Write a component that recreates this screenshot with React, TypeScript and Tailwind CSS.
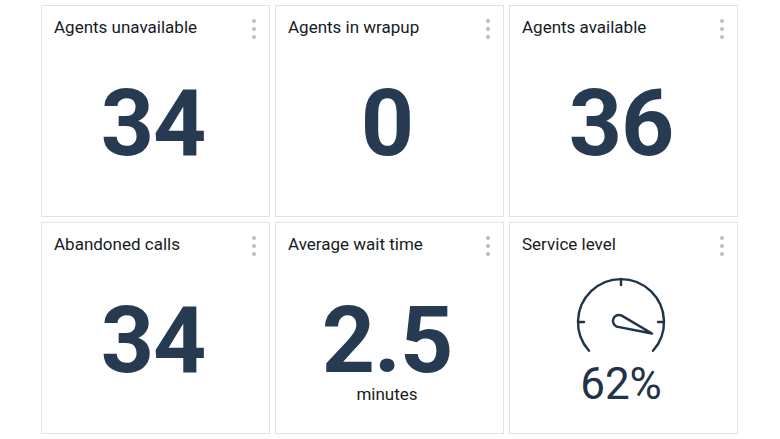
import React from 'react';

const Kebab = () => (
  <div className="absolute right-[13px] top-[13px] flex flex-col gap-[4px]">
    <span className="w-[4px] h-[4px] rounded-full bg-[#bdbdbd]" />
    <span className="w-[4px] h-[4px] rounded-full bg-[#bdbdbd]" />
    <span className="w-[4px] h-[4px] rounded-full bg-[#bdbdbd]" />
  </div>
);

const Card = ({ title, children }: { title: string; children: React.ReactNode }) => (
  <div className="relative h-[212px] bg-white border border-[#e2e2e2] px-3 pt-[9px] flex flex-col">
    <h2 className="text-[17px] leading-6 font-normal text-[#161b22]">{title}</h2>
    <Kebab />
    <div className="flex flex-col items-center pr-[5px]">{children}</div>
  </div>
);

const Big = ({ value }: { value: string }) => (
  <div className="mt-[41px] text-[93px] leading-[88px] font-bold text-[#263a51] tracking-[-1px]">{value}</div>
);

const Gauge = () => (
  <svg width="96" height="80" viewBox="0 0 96 80" fill="none" stroke="#1f3349" strokeWidth="2.4" strokeLinecap="round" strokeLinejoin="round">
    <path d="M16 74.8 A43 43 0 1 1 80 74.8" />
    <path d="M48 3 L48 9" />
    <path d="M5 46 L11 46" />
    <path d="M91 46 L85 46" />
    <path d="M48.3 39.4 L79 57.5 L43.7 50.6 A6 6 0 1 1 48.3 39.4 Z" />
  </svg>
);

export default function App() {
  return (
    <div className="w-[780px] h-[439px] bg-white pt-[5px] pl-[41px]" style={{ fontFamily: 'Roboto, "Liberation Sans", sans-serif' }}>
      <div className="w-[697px] grid grid-cols-3 gap-[5px]">
        <Card title="Agents unavailable"><Big value="34" /></Card>
        <Card title="Agents in wrapup"><Big value="0" /></Card>
        <Card title="Agents available"><Big value="36" /></Card>
        <Card title="Abandoned calls"><Big value="34" /></Card>
        <Card title="Average wait time">
          <Big value="2.5" />
          <div className="mt-[1px] text-[17px] leading-4 font-normal text-[#161b22]">minutes</div>
        </Card>
        <Card title="Service level">
          <div className="mt-[20px]"><Gauge /></div>
          <div className="mt-[6px] text-[44px] leading-none font-normal text-[#1f3349]">62%</div>
        </Card>
      </div>
    </div>
  );
}
